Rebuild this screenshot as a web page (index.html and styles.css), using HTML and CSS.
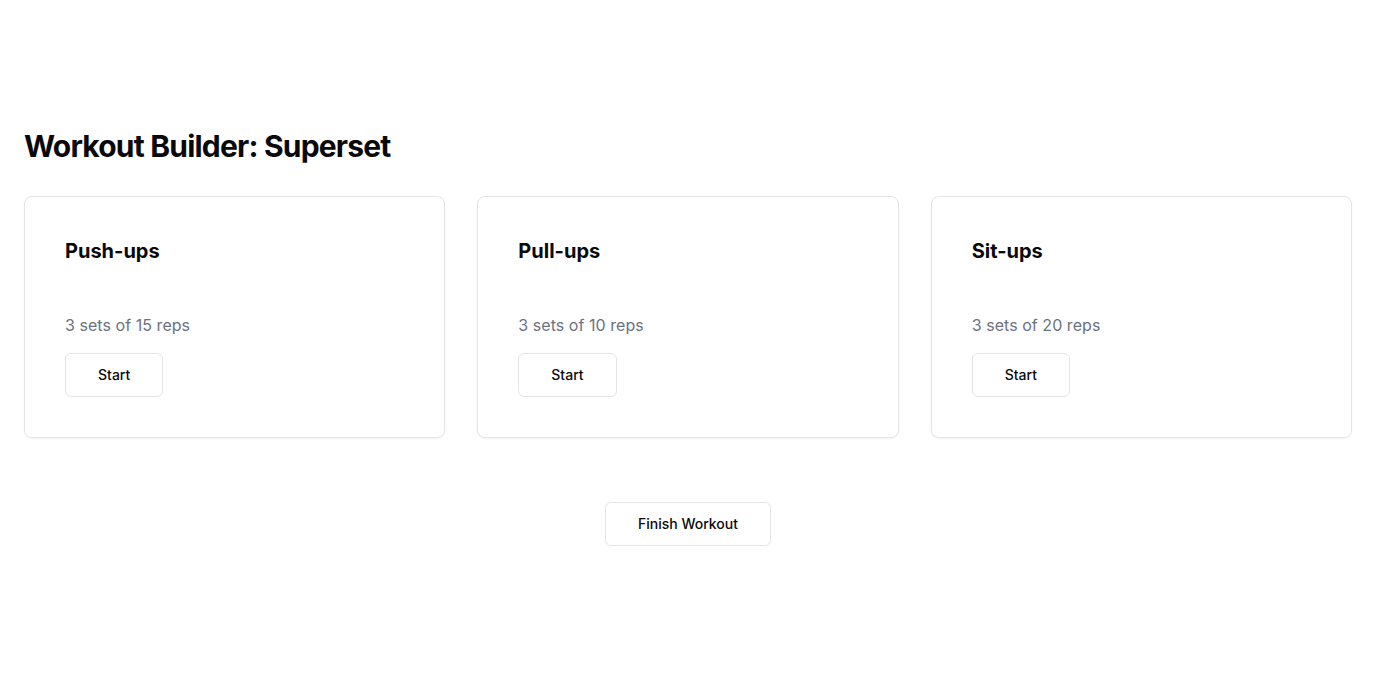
FILE: index.html
```html
<!DOCTYPE html>
<html lang="en">
<head>
<meta charset="utf-8">
<title>Workout Builder</title>
<link rel="stylesheet" href="styles.css">
</head>
<body>
<main class="page">
  <h1 class="title">Workout Builder: Superset</h1>
  <div class="grid">
    <div class="card">
      <h2 class="card-title">Push-ups</h2>
      <p class="card-desc">3 sets of 15 reps</p>
      <button class="btn">Start</button>
    </div>
    <div class="card">
      <h2 class="card-title">Pull-ups</h2>
      <p class="card-desc">3 sets of 10 reps</p>
      <button class="btn">Start</button>
    </div>
    <div class="card">
      <h2 class="card-title">Sit-ups</h2>
      <p class="card-desc">3 sets of 20 reps</p>
      <button class="btn">Start</button>
    </div>
  </div>
  <div class="footer">
    <button class="btn">Finish Workout</button>
  </div>
</main>
</body>
</html>
```

FILE: styles.css
```css
* { box-sizing: border-box; }
html, body { margin: 0; padding: 0; background: #ffffff; }
body {
  font-family: Inter, "Noto Sans", sans-serif;
  color: #09090b;
}
.page {
  min-height: 100vh;
  padding: 0 24px 1px;
  display: flex;
  flex-direction: column;
  justify-content: center;
}
.title {
  margin: 0 0 32px;
  font-size: 30px;
  line-height: 36px;
  font-weight: 700;
  letter-spacing: -0.8px;
}
.grid {
  display: grid;
  grid-template-columns: repeat(3, 1fr);
  gap: 32px;
}
.card {
  border: 1px solid #e4e4e7;
  border-radius: 8px;
  box-shadow: 0 1px 2px rgba(0,0,0,0.05);
  padding: 40px 40px 40px;
  display: flex;
  flex-direction: column;
  align-items: flex-start;
}
.card-title {
  margin: 0;
  font-size: 20px;
  line-height: 28px;
  font-weight: 700;
  letter-spacing: 0;
}
.card-desc {
  margin: 48px 0 16px;
  font-size: 16px;
  line-height: 24px;
  letter-spacing: 0.05px;
  color: #6b7280;
}
.btn {
  font-family: Inter, "Noto Sans", sans-serif;
  height: 44px;
  padding: 0 32px;
  border: 1px solid #e4e4e7;
  border-radius: 6px;
  background: #ffffff;
  color: #09090b;
  font-size: 14px;
  font-weight: 500;
  cursor: pointer;
}
.footer {
  margin-top: 64px;
  display: flex;
  justify-content: center;
}
```
